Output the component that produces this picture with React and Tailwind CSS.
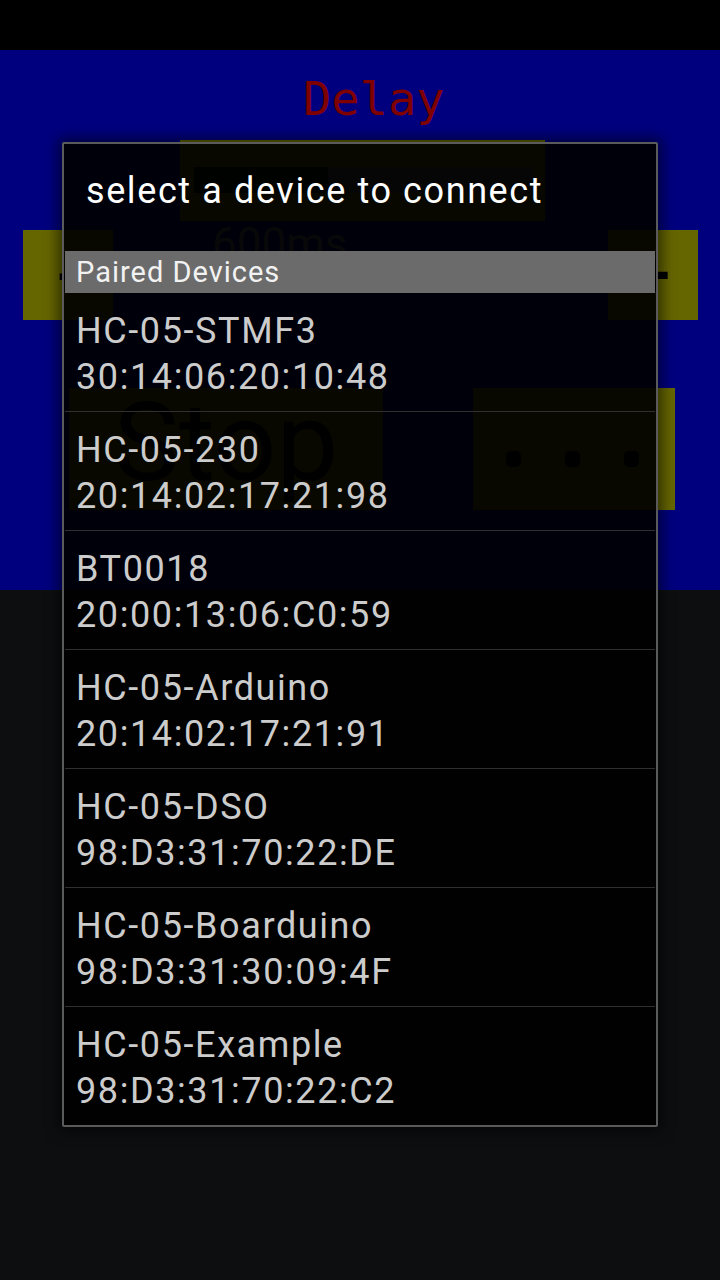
export default function App() {
  const devices = [
    ["HC-05-STMF3", "30:14:06:20:10:48"],
    ["HC-05-230", "20:14:02:17:21:98"],
    ["BT0018", "20:00:13:06:C0:59"],
    ["HC-05-Arduino", "20:14:02:17:21:91"],
    ["HC-05-DSO", "98:D3:31:70:22:DE"],
    ["HC-05-Boarduino", "98:D3:31:30:09:4F"],
    ["HC-05-Example", "98:D3:31:70:22:C2"],
  ];
  return (
    <div className="relative w-[720px] h-[1280px] overflow-hidden bg-[#0d0e10] font-['Roboto',sans-serif]">
      {/* status bar */}
      <div className="h-[50px] bg-black" />
      {/* dimmed app behind */}
      <div className="h-[540px] bg-[#00007f] flex flex-col">
        <div className="mt-[25px] pl-[303px] h-[47px] leading-[47px] text-[47px] text-[#7f0000] font-['DejaVu_Sans_Mono',monospace]">
          Delay
        </div>
        <div className="mt-[18px] ml-[180px] w-[365px] h-[81px] bg-[#666600] pt-[27px] pl-[14px]">
          <div className="flex h-[26px] w-[338px]">
            <div className="w-[134px] bg-[#0a1a0a]" />
            <div className="flex-1 bg-[#4a4a4a]" />
          </div>
        </div>
        <div className="mt-[9px] flex items-start h-[90px]">
          <div className="ml-[23px] w-[90px] h-[90px] bg-[#666600] flex items-center justify-center text-black text-[60px] leading-none font-bold">
            -
          </div>
          <div className="ml-[99px] -mt-[12px] text-[44px] leading-[52px] text-[#6a6a6a]">600ms</div>
          <div className="ml-auto mr-[22px] w-[90px] h-[90px] bg-[#666600] flex items-center justify-center text-black text-[60px] leading-none font-bold">
            +
          </div>
        </div>
        <div className="mt-[68px] flex h-[122px]">
          <div className="ml-[69px] w-[314px] h-[122px] bg-[#666600] flex items-center justify-center text-black text-[110px] leading-none pb-[12px]">
            Stop
          </div>
          <div className="ml-[90px] w-[202px] h-[122px] bg-[#666600] flex items-center justify-center gap-[44px] pt-[20px] pr-[3px]">
            <span className="w-[15px] h-[16px] rounded-[5px] bg-black" />
            <span className="w-[15px] h-[16px] rounded-[5px] bg-black" />
            <span className="w-[15px] h-[16px] rounded-[5px] bg-black" />
          </div>
        </div>
      </div>

      {/* dialog */}
      <div className="absolute left-[62px] top-[142px] w-[596px] border-2 border-[#5a5a5a] bg-[rgba(0,0,0,0.92)] px-[1px] rounded-[2px] shadow-[0_0_14px_4px_rgba(0,0,0,0.55)]">
        <div className="h-[107px] pt-[23px] pl-[21px] text-[36px] leading-[48px] tracking-[1.6px] text-white">
          select a device to connect
        </div>
        <div className="h-[42px] bg-[#6b6b6b] pl-[11px] text-[29px] leading-[42px] tracking-[1px] text-[#f2f2f2]">
          Paired Devices
        </div>
        {devices.map(([name, addr], i) => (
          <div
            key={name}
            className={
              i < devices.length - 1
                ? "h-[119px] border-b border-[#303030] pt-[15px] pl-[11px] text-[36px] leading-[46px] tracking-[1.6px] text-[#cccccc]"
                : "h-[118px] pt-[15px] pl-[11px] text-[36px] leading-[46px] tracking-[1.6px] text-[#cccccc]"
            }
          >
            <div>{name}</div>
            <div>{addr}</div>
          </div>
        ))}
      </div>
    </div>
  );
}
